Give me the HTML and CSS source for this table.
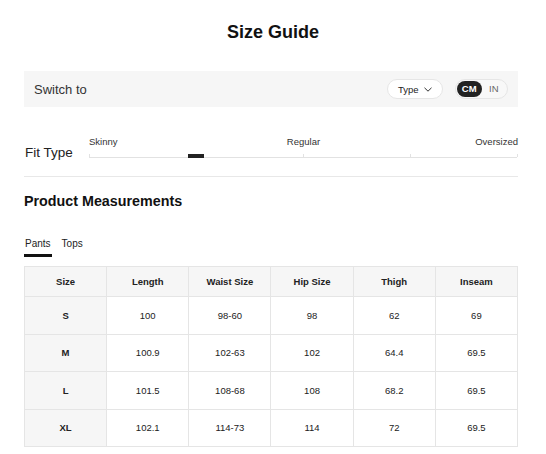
FILE: index.html
```html
<!DOCTYPE html>
<html lang="en">
<head>
<meta charset="utf-8">
<title>Size Guide</title>
<link rel="stylesheet" href="styles.css">
</head>
<body>
<div class="page">
  <h1 class="title">Size Guide</h1>
  <div class="content">
    <div class="switch-bar">
      <span class="switch-label">Switch to</span>
      <div class="switch-controls">
        <button class="type-pill">Type
          <svg class="chev" width="8" height="5" viewBox="0 0 8 5"><path d="M0.5 0.8 L4 4.2 L7.5 0.8" fill="none" stroke="#333" stroke-width="1"/></svg>
        </button>
        <div class="unit-toggle">
          <span class="unit active">CM</span>
          <span class="unit">IN</span>
        </div>
      </div>
    </div>

    <div class="fit">
      <div class="fit-label">Fit Type</div>
      <div class="slider">
        <div class="slider-labels">
          <span class="lbl-start">Skinny</span>
          <span class="lbl-mid">Regular</span>
          <span class="lbl-end">Oversized</span>
        </div>
        <div class="track">
          <span class="tick t0"></span>
          <span class="tick t1"></span>
          <span class="tick t2"></span>
          <span class="tick t3"></span>
          <span class="thumb"></span>
        </div>
      </div>
    </div>

    <h2 class="section-title">Product Measurements</h2>

    <div class="tabs">
      <span class="tab active">Pants</span>
      <span class="tab">Tops</span>
    </div>

    <table class="size-table">
      <thead>
        <tr><th>Size</th><th>Length</th><th>Waist Size</th><th>Hip Size</th><th>Thigh</th><th>Inseam</th></tr>
      </thead>
      <tbody>
        <tr><th>S</th><td>100</td><td>98-60</td><td>98</td><td>62</td><td>69</td></tr>
        <tr><th>M</th><td>100.9</td><td>102-63</td><td>102</td><td>64.4</td><td>69.5</td></tr>
        <tr><th>L</th><td>101.5</td><td>108-68</td><td>108</td><td>68.2</td><td>69.5</td></tr>
        <tr><th>XL</th><td>102.1</td><td>114-73</td><td>114</td><td>72</td><td>69.5</td></tr>
      </tbody>
    </table>
  </div>
</div>
</body>
</html>
```

FILE: styles.css
```css
* { box-sizing: border-box; }
html, body { margin: 0; padding: 0; background: #fff; }
body {
  font-family: "Liberation Sans", Arial, sans-serif;
  color: #222;
  width: 546px;
  height: 454px;
  overflow: hidden;
}
.page { padding-top: 20px; }
.title {
  margin: 0;
  text-align: center;
  font-size: 18px;
  line-height: 24px;
  font-weight: bold;
  color: #111;
}
.content {
  width: 494px;
  margin: 27px 0 0 24px;
}
.switch-bar {
  height: 36px;
  background: #f6f6f6;
  display: flex;
  align-items: center;
  justify-content: space-between;
  padding: 0 10px;
}
.switch-label { font-size: 13px; color: #333; }
.switch-controls { display: flex; align-items: center; gap: 12px; }
.type-pill {
  height: 20px;
  width: 56px;
  border: 1px solid #e6e6e6;
  border-radius: 10px;
  background: #fff;
  font-family: inherit;
  font-size: 9.5px;
  color: #222;
  display: flex;
  align-items: center;
  padding: 0 0 0 10px;
  gap: 5px;
}
.chev { display: block; margin-top: 1px; }
.unit-toggle {
  height: 20px;
  width: 53px;
  border: 1px solid #e6e6e6;
  border-radius: 10px;
  background: #f8f8f8;
  display: flex;
  align-items: center;
  padding: 0 1px;
}
.unit {
  width: 25px;
  height: 16px;
  border-radius: 8px;
  font-size: 9.5px;
  line-height: 16px;
  text-align: center;
  color: #666;
}
.unit.active { background: #222; color: #fff; font-weight: bold; }

.fit {
  display: flex;
  margin-top: 29px;
  padding-bottom: 15px;
  border-bottom: 1px solid #e8e8e8;
}
.fit-label {
  width: 64px;
  font-size: 13.5px;
  line-height: 16px;
  margin-top: 9px;
  margin-left: 1px;
  color: #222;
}
.slider { flex: 1; }
.slider-labels {
  display: grid;
  grid-template-columns: 1fr auto 1fr;
  font-size: 9.5px;
  line-height: 12px;
  color: #333;
}
.lbl-start { text-align: left; }
.lbl-mid { text-align: center; }
.lbl-end { text-align: right; }
.track {
  position: relative;
  height: 12px;
}
.track::before {
  content: "";
  position: absolute;
  left: 0;
  right: 1px;
  top: 9px;
  height: 1px;
  background: #e2e2e2;
}
.tick {
  position: absolute;
  top: 6px;
  width: 1px;
  height: 3px;
  background: #e2e2e2;
}
.t0 { left: 0; }
.t1 { left: 214px; }
.t2 { left: 321px; }
.t3 { left: 428px; }
.thumb {
  position: absolute;
  left: 99px;
  top: 6px;
  width: 16px;
  height: 4px;
  background: #222;
}

.section-title {
  margin: 15px 0 0;
  font-size: 14.3px;
  line-height: 18px;
  font-weight: bold;
  color: #111;
}
.tabs {
  display: flex;
  gap: 9px;
  margin-top: 28px;
}
.tab {
  font-size: 10px;
  line-height: 12px;
  padding: 0 1px 4px;
  color: #222;
  border-bottom: 3px solid transparent;
}
.tab.active { border-bottom-color: #111; }

.size-table {
  width: 494px;
  margin-top: 9px;
  border-collapse: collapse;
  table-layout: fixed;
}
.size-table th, .size-table td {
  border: 1px solid #e5e5e5;
  text-align: center;
  font-size: 9.5px;
  color: #222;
  padding: 0;
}
.size-table thead tr { height: 30px; }
.size-table tbody tr { height: 37.5px; }
.size-table thead th { background: #f6f6f6; font-weight: bold; }
.size-table tbody th { background: #f6f6f6; font-weight: bold; }
.size-table td { font-weight: normal; }
```
